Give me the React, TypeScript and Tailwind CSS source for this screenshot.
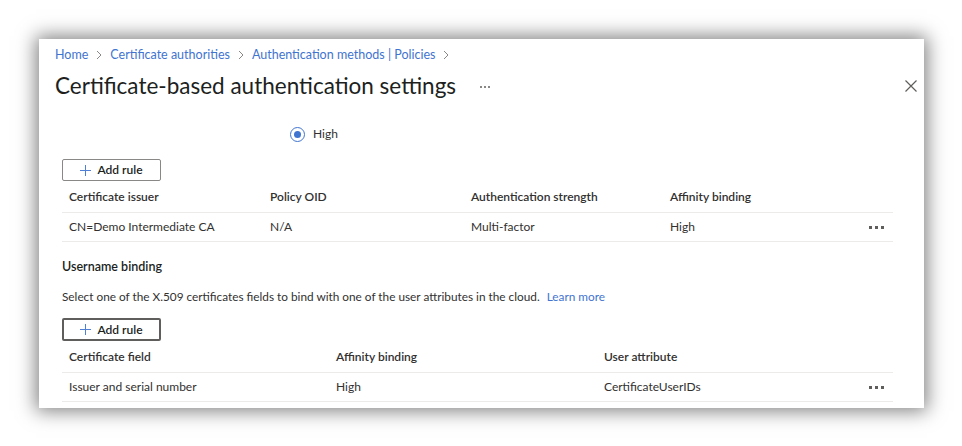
import React from 'react';

const font = { fontFamily: '"Segoe UI", Lato, "Liberation Sans", sans-serif' };

interface Column {
  label: string;
  width: string;
}

function Chevron() {
  return (
    <svg width="8" height="10" viewBox="0 0 8 10" className="mx-[7px] text-[#8a8886]">
      <path d="M2 1l4 4-4 4" fill="none" stroke="currentColor" strokeWidth="1" />
    </svg>
  );
}

function MoreDots({ className = '' }: { className?: string }) {
  return (
    <div className={`flex items-center ${className}`}>
      <span className="block bg-current" />
      <span className="block bg-current" />
      <span className="block bg-current" />
    </div>
  );
}

function AddRuleButton({ focused = false }: { focused?: boolean }) {
  return (
    <button
      className={`flex w-[99px] items-center justify-center gap-[6px] rounded-[2px] bg-white text-[12px] leading-[16px] text-[#201f1e] ${
        focused ? 'h-[23px] border-2 border-[#605e5c]' : 'h-[22px] border border-[#8a8886]'
      }`}
    >
      <svg width="11" height="11" viewBox="0 0 11 11" className="text-[#4f7fd6]">
        <path d="M5.5 0v11M0 5.5h11" stroke="currentColor" strokeWidth="1" />
      </svg>
      <span className="font-semibold">Add rule</span>
    </button>
  );
}

function RuleTable({ columns, row }: { columns: Column[]; row: string[] }) {
  return (
    <div className="w-[831px] text-[12px] leading-[16px]">
      <div className="flex h-[32px] items-center border-b border-[#edebe9] font-semibold text-[#323130]">
        {columns.map((c) => (
          <div key={c.label} className={`${c.width} pl-[7px]`}>
            {c.label}
          </div>
        ))}
      </div>
      <div className="flex h-[29px] items-center border-b border-[#edebe9] text-[#323130]">
        {row.map((v, i) => (
          <div key={i} className={`${columns[i].width} pl-[7px]`}>
            {v}
          </div>
        ))}
        <div className="flex-1" />
        <MoreDots className="mr-[9px] gap-[3px] text-[#605e5c] [&>span]:h-[3px] [&>span]:w-[3px]" />
      </div>
    </div>
  );
}

export default function App() {
  return (
    <div className="h-[446px] w-[962px] bg-white pl-[39px] pt-[39px]" style={font}>
      <div className="h-[369px] w-[885px] overflow-hidden bg-white shadow-[0_0_18px_3px_rgba(0,0,0,0.5)]">
        {/* breadcrumb */}
        <div className="mt-[8px] flex h-[16px] items-center pl-[16px] text-[12.5px] leading-[16px] text-[#3f74d0]">
          <span>Home</span>
          <Chevron />
          <span>Certificate authorities</span>
          <Chevron />
          <span>Authentication methods | Policies</span>
          <Chevron />
        </div>

        {/* title row */}
        <div className="mt-[8px] flex h-[30px] items-center pl-[16px] pr-[7px]">
          <h1 className="text-[22.5px] font-normal leading-[30px] text-[#201f1e]">
            Certificate-based authentication settings
          </h1>
          <MoreDots className="ml-[24px] mt-[2px] gap-[2px] text-[#8a8886] [&>span]:h-[2px] [&>span]:w-[2px]" />
          <div className="flex-1" />
          <svg width="12" height="12" viewBox="0 0 12 12" className="text-[#605e5c]">
            <path d="M0.5 0.5l11 11M11.5 0.5l-11 11" stroke="currentColor" strokeWidth="1.2" />
          </svg>
        </div>

        <div className="pl-[23px]">
          {/* affinity radio */}
          <div className="mt-[25px] flex h-[16px] items-center pl-[228px] text-[12px] leading-[16px] text-[#323130]">
            <span className="flex h-[15px] w-[15px] items-center justify-center rounded-full border border-[#3f74d0]">
              <span className="h-[7px] w-[7px] rounded-full bg-[#3f74d0]" />
            </span>
            <span className="ml-[8px]">High</span>
          </div>

          <div className="mt-[17px]">
            <AddRuleButton />
          </div>
          <RuleTable
            columns={[
              { label: 'Certificate issuer', width: 'w-[201px]' },
              { label: 'Policy OID', width: 'w-[201px]' },
              { label: 'Authentication strength', width: 'w-[199px]' },
              { label: 'Affinity binding', width: 'w-[150px]' },
            ]}
            row={['CN=Demo Intermediate CA', 'N/A', 'Multi-factor', 'High']}
          />

          <div className="mt-[17px] text-[12.5px] font-semibold leading-[16px] text-[#201f1e]">Username binding</div>
          <div className="mt-[14px] text-[11.8px] leading-[16px] text-[#323130]">
            Select one of the X.509 certificates fields to bind with one of the user attributes in the cloud.
            <span className="ml-[7px] text-[#3f74d0]">Learn more</span>
          </div>

          <div className="mt-[13px]">
            <AddRuleButton focused />
          </div>
          <RuleTable
            columns={[
              { label: 'Certificate field', width: 'w-[267px]' },
              { label: 'Affinity binding', width: 'w-[268px]' },
              { label: 'User attribute', width: 'w-[200px]' },
            ]}
            row={['Issuer and serial number', 'High', 'CertificateUserIDs']}
          />
        </div>
      </div>
    </div>
  );
}
